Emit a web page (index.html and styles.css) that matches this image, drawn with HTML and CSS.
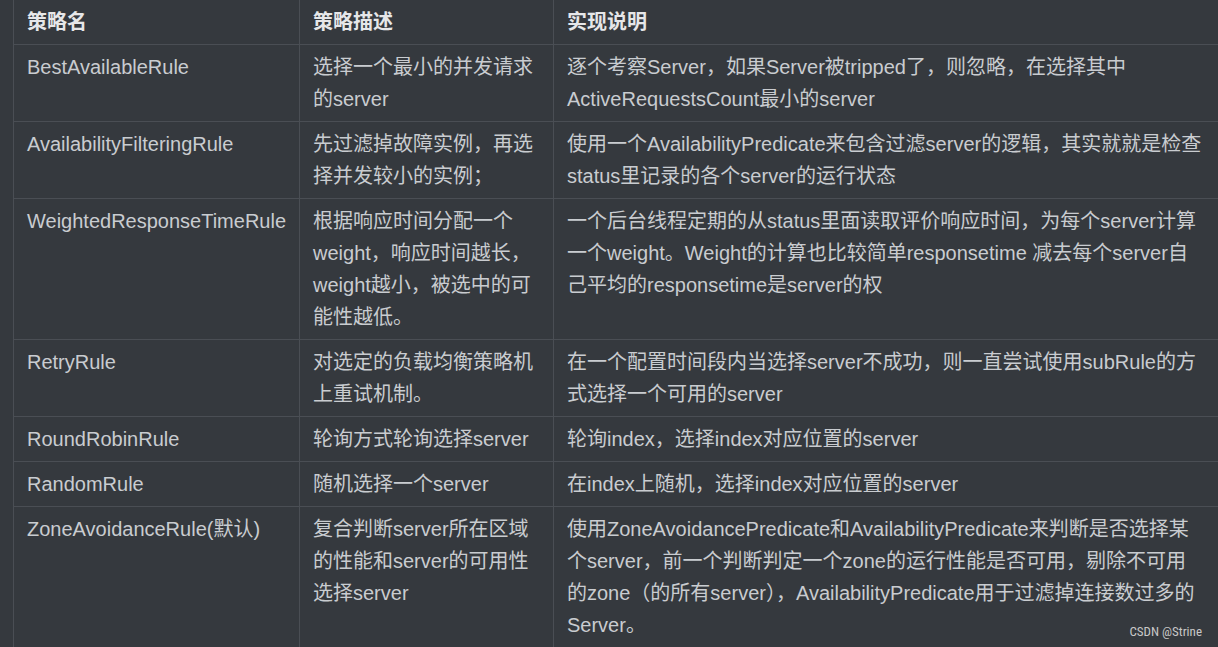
FILE: index.html
```html
<!DOCTYPE html>
<html lang="zh-CN">
<head>
<meta charset="utf-8">
<title>负载均衡策略</title>
<link rel="stylesheet" href="styles.css">
</head>
<body>
<div class="page">
  <table class="rules">
    <colgroup>
      <col class="c1"><col class="c2"><col class="c3">
    </colgroup>
    <thead>
      <tr><th>策略名</th><th>策略描述</th><th>实现说明</th></tr>
    </thead>
    <tbody>
      <tr>
        <td>BestAvailableRule</td>
        <td>选择一个最小的并发请求的server</td>
        <td>逐个考察Server，如果Server被tripped了，则忽略，在选择其中ActiveRequestsCount最小的server</td>
      </tr>
      <tr>
        <td>AvailabilityFilteringRule</td>
        <td>先过滤掉故障实例，再选择并发较小的实例；</td>
        <td>使用一个AvailabilityPredicate来包含过滤server的逻辑，其实就就是检查status里记录的各个server的运行状态</td>
      </tr>
      <tr>
        <td>WeightedResponseTimeRule</td>
        <td>根据响应时间分配一个weight，响应时间越长，weight越小，被选中的可能性越低。</td>
        <td>一个后台线程定期的从status里面读取评价响应时间，为每个server计算一个weight。Weight的计算也比较简单responsetime 减去每个server自己平均的responsetime是server的权</td>
      </tr>
      <tr>
        <td>RetryRule</td>
        <td>对选定的负载均衡策略机上重试机制。</td>
        <td>在一个配置时间段内当选择server不成功，则一直尝试使用subRule的方式选择一个可用的server</td>
      </tr>
      <tr>
        <td>RoundRobinRule</td>
        <td>轮询方式轮询选择server</td>
        <td>轮询index，选择index对应位置的server</td>
      </tr>
      <tr>
        <td>RandomRule</td>
        <td>随机选择一个server</td>
        <td>在index上随机，选择index对应位置的server</td>
      </tr>
      <tr>
        <td>ZoneAvoidanceRule(默认)</td>
        <td>复合判断server所在区域的性能和server的可用性选择server</td>
        <td>使用ZoneAvoidancePredicate和AvailabilityPredicate来判断是否选择某个server，前一个判断判定一个zone的运行性能是否可用，剔除不可用的zone（的所有server），AvailabilityPredicate用于过滤掉连接数过多的Server。</td>
      </tr>
    </tbody>
  </table>
  <div class="watermark">CSDN @Strine</div>
</div>
</body>
</html>
```
FILE: styles.css
```css
html, body {
  margin: 0;
  padding: 0;
  background: #35393e;
}
.page {
  position: relative;
  width: 1218px;
  height: 647px;
  overflow: hidden;
  padding-left: 13px;
  box-sizing: border-box;
}
.rules {
  border-collapse: collapse;
  table-layout: fixed;
  width: 1205px;
  font-family: "Liberation Sans", "Noto Sans CJK SC", sans-serif;
  font-size: 20px;
  line-height: 32px;
  color: #c9ccd0;
}
.c1 { width: 286px; }
.c2 { width: 254px; }
.c3 { width: 665px; }
.rules th,
.rules td {
  border: 1px solid #4a4e54;
  padding: 6px 13px;
  text-align: left;
  vertical-align: top;
}
.rules th {
  border-top: 0;
  font-weight: bold;
  color: #e6e7e9;
}
.watermark {
  position: absolute;
  right: 16px;
  bottom: 8px;
  font-family: "Roboto", sans-serif;
  font-stretch: 75%;
  font-size: 13px;
  line-height: 14px;
  color: #c8c8c8;
}
```
